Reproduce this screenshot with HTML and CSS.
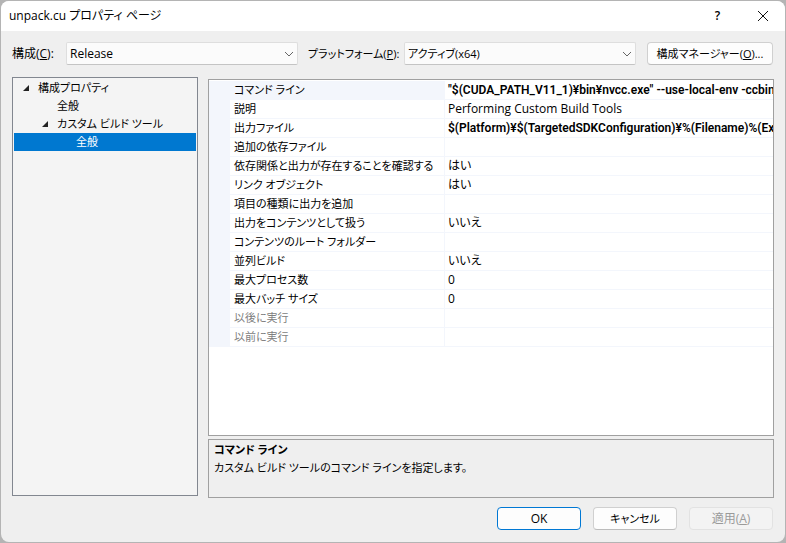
FILE: index.html
```
<!DOCTYPE html>
<html lang="ja">
<head>
    <meta charset="UTF-8">
    <title>unpack.cu プロパティ ページ</title>
    <link rel="stylesheet" href="styles.css">
</head>
<body>
    <div class="dialog">
        <header class="titlebar">
            <h1>unpack.cu プロパティ ページ</h1>
            <button class="titleBtn" type="button" aria-label="ヘルプ">?</button>
            <button class="titleBtn" type="button" aria-label="閉じる">
                <svg width="12" height="12" viewBox="0 0 12 12"><path d="M1 1L11 11M11 1L1 11"/></svg>
            </button>
        </header>

        <div class="config">
            <label for="config">構成(<u>C</u>):</label>
            <div class="combo">
                <select id="config">
                    <option>Release</option>
                </select>
                <svg width="10" height="6" viewBox="0 0 10 6"><path d="M1 1L5 5L9 1"/></svg>
            </div>
            <label class="platformLabel small" for="platform">プラットフォーム(<u>P</u>):</label>
            <div class="combo">
                <select class="small" id="platform">
                    <option>アクティブ(x64)</option>
                </select>
                <svg width="10" height="6" viewBox="0 0 10 6"><path d="M1 1L5 5L9 1"/></svg>
            </div>
            <button class="btn managerBtn small" type="button">構成マネージャー(<u>O</u>)...</button>
        </div>

        <div class="content">
            <ul class="tree small" role="tree">
                <li role="treeitem" aria-expanded="true">
                    <div class="node"><svg width="8" height="8" viewBox="0 0 8 8"><path d="M7 1V7H1Z"/></svg>構成プロパティ</div>
                    <ul role="group">
                        <li role="treeitem"><div class="node leaf">全般</div></li>
                        <li role="treeitem" aria-expanded="true">
                            <div class="node level2"><svg width="8" height="8" viewBox="0 0 8 8"><path d="M7 1V7H1Z"/></svg>カスタム ビルド ツール</div>
                            <ul role="group">
                                <li role="treeitem" aria-selected="true"><div class="node leaf2 active">全般</div></li>
                            </ul>
                        </li>
                    </ul>
                </li>
            </ul>

            <div class="right">
                <div class="props">
                    <table>
                        <colgroup>
                            <col class="colGutter">
                            <col class="colName">
                            <col>
                        </colgroup>
                        <tbody>
                            <tr class="current"><td></td><th scope="row">コマンド ライン</th><td class="changed">"$(CUDA_PATH_V11_1)¥bin¥nvcc.exe" --use-local-env -ccbin</td></tr>
                            <tr><td></td><th scope="row">説明</th><td>Performing Custom Build Tools</td></tr>
                            <tr><td></td><th scope="row">出力ファイル</th><td class="changed">$(Platform)¥$(TargetedSDKConfiguration)¥%(Filename)%(Ext</td></tr>
                            <tr><td></td><th scope="row">追加の依存ファイル</th><td></td></tr>
                            <tr><td></td><th scope="row">依存関係と出力が存在することを確認する</th><td>はい</td></tr>
                            <tr><td></td><th scope="row">リンク オブジェクト</th><td>はい</td></tr>
                            <tr><td></td><th scope="row">項目の種類に出力を追加</th><td></td></tr>
                            <tr><td></td><th scope="row">出力をコンテンツとして扱う</th><td>いいえ</td></tr>
                            <tr><td></td><th scope="row">コンテンツのルート フォルダー</th><td></td></tr>
                            <tr><td></td><th scope="row">並列ビルド</th><td>いいえ</td></tr>
                            <tr><td></td><th scope="row">最大プロセス数</th><td>0</td></tr>
                            <tr><td></td><th scope="row">最大バッチ サイズ</th><td>0</td></tr>
                            <tr class="readonly"><td></td><th scope="row">以後に実行</th><td></td></tr>
                            <tr class="readonly"><td></td><th scope="row">以前に実行</th><td></td></tr>
                        </tbody>
                    </table>
                </div>
                <div class="desc small">
                    <h2>コマンド ライン</h2>
                    <p>カスタム ビルド ツールのコマンド ラインを指定します。</p>
                </div>
            </div>
        </div>

        <footer class="actions">
            <button class="btn default" type="button">OK</button>
            <button class="btn small" type="button">キャンセル</button>
            <button class="btn" type="button" disabled>適用(<u>A</u>)</button>
        </footer>
    </div>
</body>
</html>
```
FILE: styles.css
```
* {
    box-sizing: border-box;
    padding: 0;
    margin: 0;
    list-style: none;
}
body {
    min-height: 100vh;
    padding: 1px;
    display: flex;
    background: #b4b4b4;
    font-family: "Open Sans", "Noto Sans CJK JP", sans-serif;
    font-size: 12px;
    line-height: 18px;
    font-feature-settings: "palt";
    color: #000;
}
button, select {
    font: inherit;
    font-feature-settings: inherit;
    color: inherit;
}
.small {
    font-size: 11px;
}
.dialog {
    flex: 1;
    min-width: 0;
    display: flex;
    flex-direction: column;
    background: #efefef;
    border-radius: 8px;
    overflow: hidden;
}

/* title bar */
.titlebar {
    display: flex;
    align-items: center;
    height: 30px;
    padding-left: 8px;
    background: #fff;
}
.titlebar h1 {
    flex: 1;
    font-size: 12px;
    font-weight: normal;
}
.titleBtn {
    display: flex;
    align-items: center;
    justify-content: center;
    width: 45px;
    height: 30px;
    border: 0;
    background: none;
    font-size: 12px;
    font-weight: 600;
}
.titleBtn:hover {
    background: #e5e5e5;
}
.titleBtn svg {
    fill: none;
    stroke: #111;
}

/* configuration row */
.config {
    display: grid;
    grid-template-columns: 54px 1fr 106px 1fr 137px;
    align-items: center;
    padding: 11px 12px 0 11px;
    white-space: nowrap;
}
.platformLabel {
    padding-left: 10px;
}
.combo {
    position: relative;
}
.combo select {
    display: block;
    width: 100%;
    height: 23px;
    padding: 0 24px 0 3px;
    appearance: none;
    background: #fbfbfb;
    border: 1px solid #dedede;
    border-bottom-color: #c4c4c4;
    border-radius: 2px;
}
.combo svg {
    position: absolute;
    right: 4px;
    top: 9px;
    fill: none;
    stroke: #666;
    pointer-events: none;
}
.btn {
    height: 23px;
    width: 84px;
    line-height: 20px;
    background: #fdfdfd;
    border: 1px solid #d0d0d0;
    border-bottom-color: #bcbcbc;
    border-radius: 4px;
}
.btn:hover {
    background: #e0eef9;
}
.btn.default {
    border-color: #0078d4;
}
.btn:disabled {
    background: #f3f3f3;
    border-color: #e2e2e2;
    color: #9a9a9a;
}
.managerBtn {
    width: auto;
    margin-left: 11px;
}

/* tree and property grid */
.content {
    flex: 1;
    display: flex;
    gap: 10px;
    padding: 12px 11px 0 11px;
}
.tree {
    width: 186px;
    flex: none;
    padding: 1px;
    margin-bottom: 2px;
    border: 1px solid #828790;
    background: #f4f4f4;
}
.node {
    display: flex;
    align-items: center;
    gap: 8px;
    height: 18px;
    padding-left: 8px;
    cursor: default;
}
.node svg {
    fill: #222;
}
.node.level2 {
    padding-left: 27px;
}
.node.leaf {
    padding-left: 43px;
}
.node.leaf2 {
    padding-left: 62px;
}
.node.active {
    background: #0078d0;
    color: #fff;
}
.right {
    flex: 1;
    min-width: 0;
    display: flex;
    flex-direction: column;
    gap: 3px;
    padding-top: 2px;
}
.props {
    flex: 1;
    padding-top: 1px;
    border: 1px solid #a0a0a0;
    background: #fff;
    overflow: hidden;
}
.props table {
    width: 100%;
    table-layout: fixed;
    border-collapse: separate;
    border-spacing: 0;
}
.colGutter {
    width: 21px;
}
.colName {
    width: 215px;
}
.props tr {
    height: 19px;
}
.props th,
.props td {
    padding: 0 0 0 4px;
    border-bottom: 1px solid #f3f6fc;
    font-weight: normal;
    text-align: left;
    white-space: nowrap;
    overflow: hidden;
}
.props th {
    border-right: 1px solid #f3f6fc;
    font-size: 11px;
}
.props td {
    padding-left: 3px;
}
.props td:first-child,
.props .current th {
    background: #f3f6fc;
}
.props .changed {
    font-family: Roboto, "Open Sans", sans-serif;
    font-weight: 600;
}
.props .readonly th {
    color: #808080;
}
.desc {
    height: 59px;
    padding: 1px 5px;
    border: 1px solid #a0a0a0;
}
.desc h2 {
    font-size: 11px;
    font-weight: 600;
}

/* bottom buttons */
.actions {
    display: flex;
    justify-content: flex-end;
    gap: 12px;
    padding: 9px 12px 12px;
}
```
